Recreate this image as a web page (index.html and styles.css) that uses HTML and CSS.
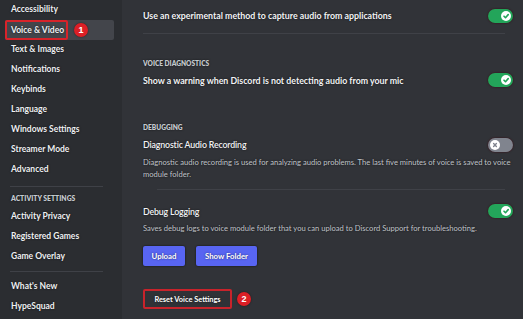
FILE: index.html
```html
<!DOCTYPE html>
<html>
<head>
<meta charset="utf-8">
<link rel="stylesheet" href="styles.css">
</head>
<body>
<div class="app">
  <nav class="sidebar">
    <div class="item">Accessibility</div>
    <div class="item selected"><span class="mark">Voice &amp; Video</span><span class="badge badge-one">1</span></div>
    <div class="item">Text &amp; Images</div>
    <div class="item">Notifications</div>
    <div class="item">Keybinds</div>
    <div class="item">Language</div>
    <div class="item">Windows Settings</div>
    <div class="item">Streamer Mode</div>
    <div class="item">Advanced</div>
    <div class="sep sep-a"></div>
    <div class="nav-head">Activity Settings</div>
    <div class="item">Activity Privacy</div>
    <div class="item">Registered Games</div>
    <div class="item">Game Overlay</div>
    <div class="sep sep-b"></div>
    <div class="item">What's New</div>
    <div class="item">HypeSquad</div>
  </nav>
  <main class="content">
    <div class="row row-1">
      <span class="label">Use an experimental method to capture audio from applications</span>
      <span class="toggle on"><span class="knob"><svg viewBox="0 0 10 10"><path d="M3 5.2 L4.5 6.7 L7.2 3.6" fill="none" stroke="#23a55a" stroke-width="1.6" stroke-linecap="round" stroke-linejoin="round"/></svg></span></span>
    </div>
    <div class="divider div-1"></div>
    <div class="head head-1">Voice Diagnostics</div>
    <div class="row row-2">
      <span class="label">Show a warning when Discord is not detecting audio from your mic</span>
      <span class="toggle on"><span class="knob"><svg viewBox="0 0 10 10"><path d="M3 5.2 L4.5 6.7 L7.2 3.6" fill="none" stroke="#23a55a" stroke-width="1.6" stroke-linecap="round" stroke-linejoin="round"/></svg></span></span>
    </div>
    <div class="head head-2">Debugging</div>
    <div class="row row-title row-t1">
      <span class="title">Diagnostic Audio Recording</span>
      <span class="toggle off"><span class="knob"><svg viewBox="0 0 10 10"><path d="M3.6 3.6 L6.4 6.4 M6.4 3.6 L3.6 6.4" fill="none" stroke="#80848e" stroke-width="1.4" stroke-linecap="round"/></svg></span></span>
    </div>
    <p class="desc">Diagnostic audio recording is used for analyzing audio problems. The last five minutes of voice is saved to voice module folder.</p>
    <div class="divider div-2"></div>
    <div class="row row-title row-t2">
      <span class="title">Debug Logging</span>
      <span class="toggle on"><span class="knob"><svg viewBox="0 0 10 10"><path d="M3 5.2 L4.5 6.7 L7.2 3.6" fill="none" stroke="#23a55a" stroke-width="1.6" stroke-linecap="round" stroke-linejoin="round"/></svg></span></span>
    </div>
    <p class="desc">Saves debug logs to voice module folder that you can upload to Discord Support for troubleshooting.</p>
    <div class="buttons">
      <button class="btn primary btn-upload">Upload</button>
      <button class="btn primary btn-folder">Show Folder</button>
    </div>
    <div class="reset-row">
      <span class="reset-mark"><button class="btn reset">Reset Voice Settings</button></span>
      <span class="badge">2</span>
    </div>
  </main>
</div>
</body>
</html>
```

FILE: styles.css
```css
* { box-sizing: border-box; }
html, body { margin: 0; padding: 0; }
body {
  width: 523px;
  height: 319px;
  overflow: hidden;
  background: #313338;
  font-family: Lato, "Open Sans", sans-serif;
  color: #f2f3f5;
}
.app {
  display: flex;
  height: 319px;
}
.sidebar {
  width: 122px;
  flex: none;
  background: #2b2d31;
  display: flex;
  flex-direction: column;
}
.item {
  position: relative;
  height: 20px;
  line-height: 18px;
  padding: 0 0 2px 6px;
  margin-left: 5px;
  width: 109px;
  font-size: 8.5px;
  font-weight: 700;
  color: #eef0f2;
  text-shadow: 0 0 2px rgba(0,0,0,0.7);
  white-space: nowrap;
}
.item.selected {
  background: #43454b;
  border-radius: 2px;
  padding-left: 0;
  display: flex;
  align-items: center;
  padding-bottom: 0;
}
.mark {
  display: flex;
  align-items: center;
  height: 20px;
  padding: 0 2px 1px 4px;
  border: 2px solid #d8232a;
  border-radius: 2px;
}
.badge {
  display: inline-flex;
  align-items: center;
  justify-content: center;
  width: 14px;
  height: 14px;
  border-radius: 50%;
  background: #dc1f26;
  color: #fff;
  font-family: "Liberation Sans", Arial, sans-serif;
  font-weight: 700;
  font-size: 9px;
  text-shadow: none;
  box-shadow: 0 0 2px rgba(0,0,0,0.5);
}
.badge-one {
  margin-left: 6px;
}
.sep {
  height: 1px;
  background: #3f4147;
  margin-left: 10px;
  width: 93px;
}
.sep-a { margin-top: 6px; }
.sep-b { margin-top: 4px; margin-bottom: 5px; }
.nav-head {
  padding: 5px 0 3px 11px;
  line-height: 12px;
  height: 20px;
  font-size: 6.8px;
  font-weight: 800;
  text-transform: uppercase;
  color: #c4c9ce;
  text-shadow: 0 0 2px rgba(0,0,0,0.7);
}
.content {
  flex: 1;
  padding: 0 10px 0 21px;
  display: flex;
  flex-direction: column;
  text-shadow: 0 0 2px rgba(0,0,0,0.7);
}
.row {
  display: flex;
  align-items: center;
  justify-content: space-between;
}
.row-1 { height: 31px; }
.row-2 { height: 22px; }
.label {
  font-size: 8.8px;
  font-weight: 700;
  color: #f2f3f5;
}
.title {
  font-size: 8.8px;
  font-weight: 600;
  letter-spacing: -0.15px;
  color: #f2f3f5;
}
.row-t1 { height: 23px; }
.row-t2 { height: 22px; margin-top: 10px; }
.divider {
  height: 1px;
  background: #3f4147;
  margin-right: 8px;
}
.div-1 { margin-top: 2px; }
.div-2 { margin-top: 9px; margin-left: 14px; }
.head {
  height: 12px;
  line-height: 12px;
  font-size: 6.6px;
  font-weight: 800;
  text-transform: uppercase;
  color: #c4c9ce;
}
.head-1 { margin-top: 23px; }
.head-2 { margin-top: 30px; }
.desc {
  margin: 0;
  font-size: 7.6px;
  line-height: 12px;
  color: #c0c4ca;
  padding-right: 2px;
}
.toggle {
  position: relative;
  flex: none;
  width: 25px;
  height: 14px;
  border-radius: 7px;
  display: flex;
  align-items: center;
  padding: 0 2px;
  box-shadow: 0 0 2px rgba(60,0,10,0.9);
}
.toggle.on { background: #23a55a; justify-content: flex-end; }
.toggle.off { background: #80848e; justify-content: flex-start; }
.knob {
  width: 10px;
  height: 10px;
  border-radius: 50%;
  background: #fff;
  display: flex;
}
.knob svg { width: 10px; height: 10px; }
.buttons {
  display: flex;
  gap: 11px;
  margin-top: 12px;
}
.btn {
  font-family: Lato, "Open Sans", sans-serif;
  font-size: 7.8px;
  font-weight: 700;
  color: #fff;
  border: none;
  border-radius: 2px;
  height: 20px;
  padding: 0;
  text-shadow: 0 0 2px rgba(0,0,0,0.6);
}
.btn.primary {
  background: #5865f2;
  box-shadow: 0 0 2px rgba(0,0,0,0.8);
}
.btn-upload { width: 42px; }
.btn-folder { width: 61px; }
.reset-row {
  display: flex;
  align-items: center;
  gap: 5px;
  margin-top: 23px;
}
.reset-mark {
  display: flex;
  border: 2px solid #c8232b;
  border-radius: 2px;
  width: 89px;
  height: 20px;
}
.btn.reset {
  flex: 1;
  height: 16px;
  background: #303237;
  font-size: 7.4px;
}
```
